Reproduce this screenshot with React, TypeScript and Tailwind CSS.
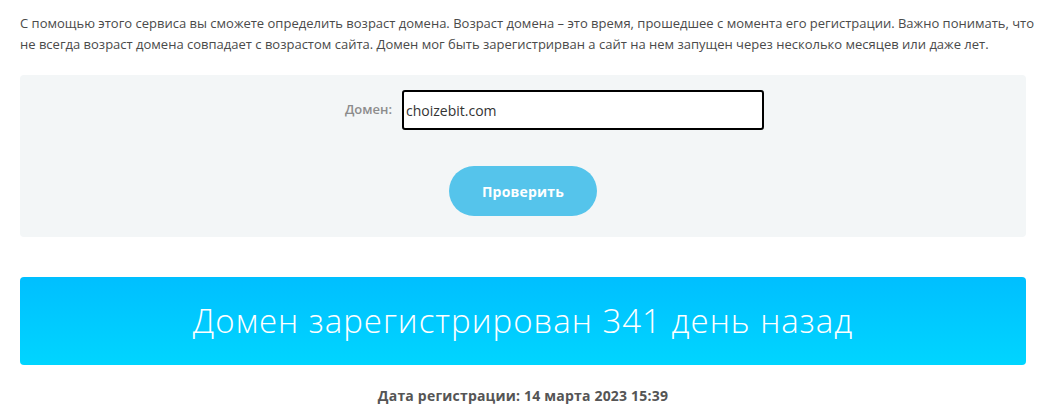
export default function App() {
  return (
    <div className="bg-white px-5 pt-[13px] pb-4 font-['Open_Sans',sans-serif] text-[#4a4a4a]">
      <p className="text-[13px] leading-[21px] whitespace-nowrap">
        С помощью этого сервиса вы сможете определить возраст домена. Возраст домена – это время, прошедшее с момента его регистрации. Важно понимать, что
        <br />
        не всегда возраст домена совпадает с возрастом сайта. Домен мог быть зарегистрирван а сайт на нем запущен через несколько месяцев или даже лет.
      </p>

      <div className="mt-[20px] w-[1006px] h-[162px] rounded bg-[#f3f6f7] flex flex-col items-center pt-[15px]">
        <div className="flex items-center">
          <label className="w-[120px] pr-[10px] text-right text-[13px] font-semibold text-[#8c8c8c]">Домен:</label>
          <input
            defaultValue="choizebit.com"
            className="w-[362px] h-[40px] border-2 border-black rounded-[3px] bg-white px-[2px] text-[14px] text-[#333] outline-none"
          />
        </div>
        <div className="flex justify-center mt-[36px]">
          <button className="w-[148px] h-[50px] rounded-full bg-[#55c4eb] text-white text-[14px] font-bold tracking-[0.2px]">
            Проверить
          </button>
        </div>
      </div>

      <div className="mt-[40px] w-[1006px] h-[88px] rounded bg-gradient-to-b from-[#00bfff] to-[#00d5ff] flex items-center justify-center">
        <span className="text-white text-[33px] font-light tracking-[1px]">Домен зарегистрирован 341 день назад</span>
      </div>

      <div className="mt-[20px] w-[1006px] text-center text-[14px] font-bold tracking-[0.2px] text-[#555]">
        Дата регистрации: 14 марта 2023 15:39
      </div>
    </div>
  );
}
